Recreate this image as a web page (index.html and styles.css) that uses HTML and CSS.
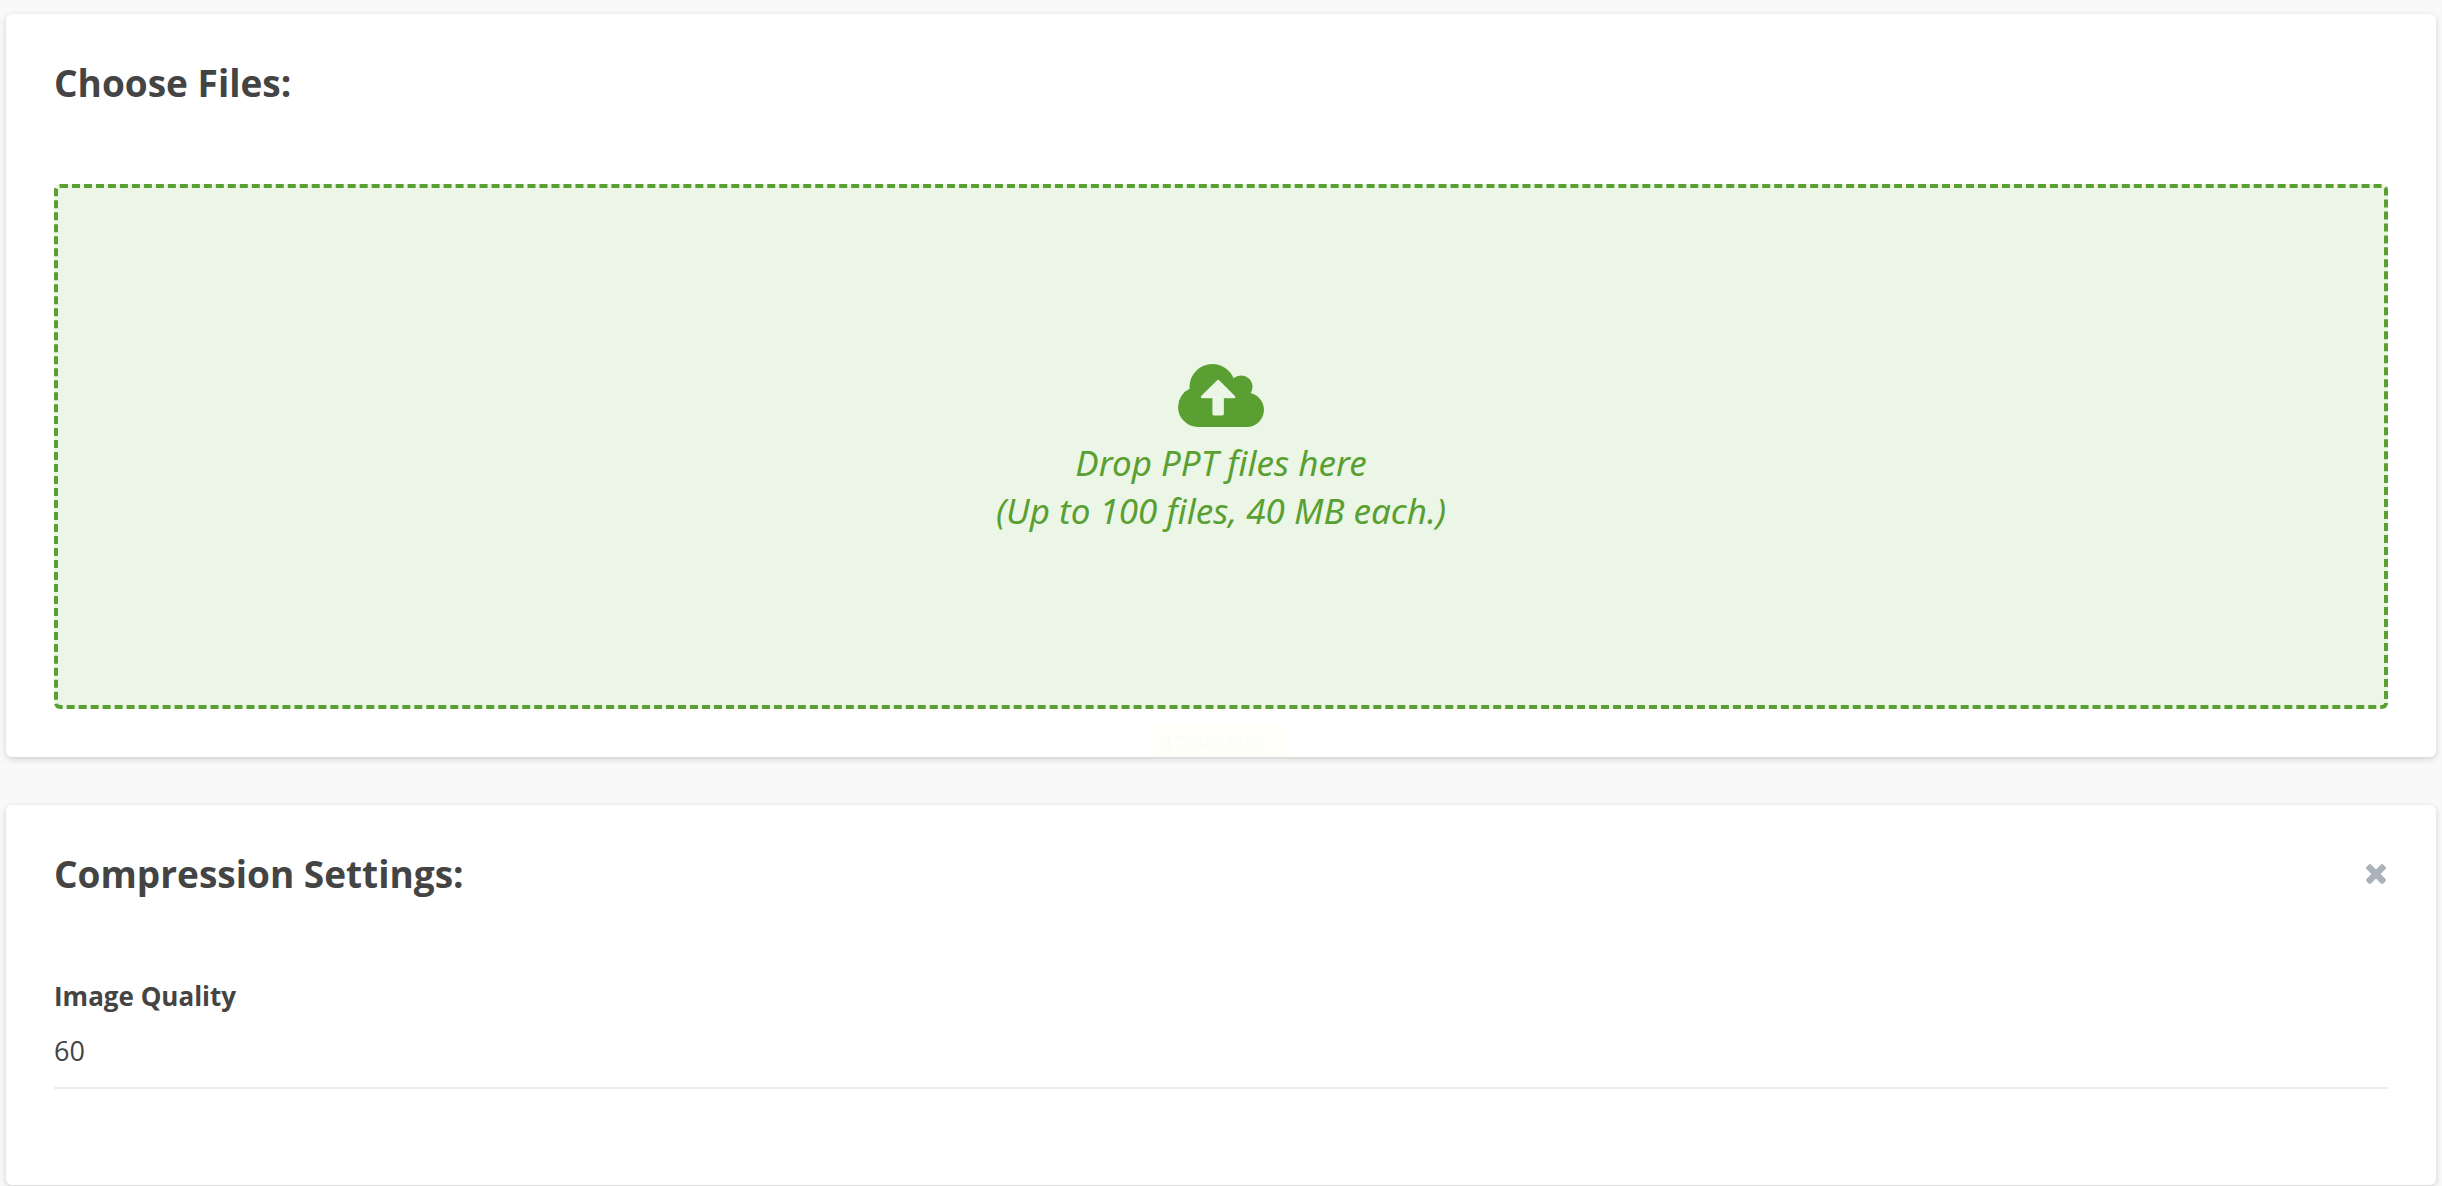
FILE: index.html
```html
<!DOCTYPE html>
<html lang="en">
<head>
<meta charset="utf-8">
<meta name="viewport" content="width=device-width, initial-scale=1">
<title>Compress PPT</title>
<link rel="stylesheet" href="styles.css">
</head>
<body>
<main class="page">
  <section class="card">
    <header class="card-header">
      <h2 class="card-title">Choose Files:</h2>
    </header>
    <button type="button" class="dropzone">
      <svg class="cloud-icon" viewBox="0 128 1920 1408" aria-hidden="true"><path d="M1280 864q0-14-9-23l-352-352q-9-9-23-9t-23 9l-351 351q-10 12-10 24 0 14 9 23t23 9h224v352q0 13 9.500 22.500t22.500 9.500h192q13 0 22.500-9.500t9.500-22.500v-352h224q13 0 22.500-9.500t9.500-22.500zm640 288q0 159-112.500 271.500t-271.500 112.500h-1088q-185 0-316.500-131.500t-131.500-316.500q0-130 70-240t188-165q-2-30-2-43 0-212 150-362t362-150q156 0 285.500 87t188.500 231q71-62 166-62 106 0 181 75t75 181q0 76-41 138 130 31 213.500 135.500t83.500 238.500z"/></svg>
      <span class="drop-text">Drop PPT files here</span>
      <span class="drop-text">(Up to 100 files, 40 MB each.)</span>
    </button>
    <span class="stamp">1763092279</span>
  </section>

  <section class="card">
    <header class="card-header">
      <h2 class="card-title">Compression Settings:</h2>
      <button type="button" class="close" aria-label="Close">
        <svg class="close-icon" viewBox="302 366 1188 1188" aria-hidden="true"><path d="M1490 1322q0 40-28 68l-136 136q-28 28-68 28t-68-28l-294-294-294 294q-28 28-68 28t-68-28l-136-136q-28-28-28-68t28-68l294-294-294-294q-28-28-28-68t28-68l136-136q28-28 68-28t68 28l294 294 294-294q28-28 68-28t68 28l136 136q28 28 28 68t-28 68l-294 294 294 294q28 28 28 68z"/></svg>
      </button>
    </header>
    <div class="field">
      <label class="field-label" for="quality">Image Quality</label>
      <input class="field-input" id="quality" type="text" inputmode="numeric" value="60">
    </div>
  </section>
</main>
</body>
</html>
```
FILE: styles.css
```css
* {
  box-sizing: border-box;
}

body {
  min-height: 100vh;
  margin: 0;
  background: #f9f9f9;
  color: #444;
  font-family: "Segoe UI", "Open Sans", "Noto Sans", sans-serif;
}

.page {
  display: flex;
  flex-direction: column;
  gap: 48px;
  padding: 14px 6px 0;
}

.card {
  position: relative;
  padding: 48px;
  border-radius: 6px;
  background: #fff;
  box-shadow: 0 2px 6px rgba(0, 0, 0, 0.17);
}

.card-header {
  display: flex;
  align-items: center;
  justify-content: space-between;
  height: 42px;
  margin-bottom: 80px;
}

.card-title {
  margin: 0;
  font-size: 37px;
  line-height: 42px;
  font-weight: 700;
}

.close {
  display: flex;
  padding: 2px;
  border: 0;
  background: none;
  cursor: pointer;
}

.close-icon {
  width: 20px;
  height: 20px;
  fill: #a9b2bb;
}

.dropzone {
  display: flex;
  flex-direction: column;
  align-items: center;
  width: 100%;
  padding: 176px 24px 170px;
  border: 4px dashed #5a9f32;
  border-radius: 6px;
  background: #ebf6e6;
  color: #5a9f32;
  font: inherit;
  cursor: pointer;
}

.cloud-icon {
  width: 86px;
  height: 63px;
  margin-bottom: 12px;
  fill: currentColor;
}

.drop-text {
  font-family: "Segoe UI", "Noto Sans", "Open Sans", sans-serif;
  font-size: 35px;
  line-height: 48px;
  font-style: italic;
}

.stamp {
  position: absolute;
  bottom: 0;
  left: 50%;
  width: 138px;
  padding: 6px 12px 2px;
  transform: translateX(-50%);
  background: #fffffa;
  color: #fbfbf7;
  font: 20px/24px "Liberation Serif", serif;
}

.field {
  display: flex;
  flex-direction: column;
  margin-bottom: 48px;
}

.field-label {
  font-size: 26px;
  line-height: 42px;
  font-weight: 700;
}

.field-input {
  width: 100%;
  height: 72px;
  padding: 0 0 4px;
  border: 0;
  border-bottom: 2px solid #ededed;
  background: none;
  color: inherit;
  font: inherit;
  font-size: 27px;
}
```
